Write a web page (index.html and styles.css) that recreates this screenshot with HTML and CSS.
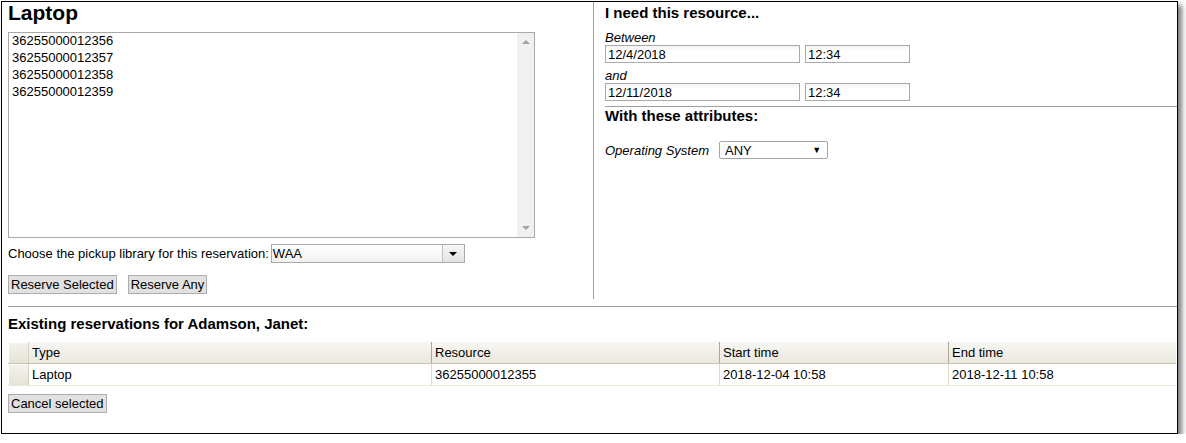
FILE: index.html
```html
<!DOCTYPE html>
<html lang="en">
<head>
    <meta charset="UTF-8">
    <title>Reserve resource</title>
    <link rel="stylesheet" href="styles.css">
</head>
<body>
    <div class="frame">
        <div class="top">
            <!-- resource list and pickup library -->
            <div class="pick">
                <h2>Laptop</h2>
                <div class="listbox">
                    <ul class="items">
                        <li>36255000012356</li>
                        <li>36255000012357</li>
                        <li>36255000012358</li>
                        <li>36255000012359</li>
                    </ul>
                    <div class="scrollbar">
                        <span class="arrow up"></span>
                        <span class="arrow down"></span>
                    </div>
                </div>
                <div class="pickup">
                    <label>Choose the pickup library for this reservation:</label>
                    <span class="combo">
                        <span class="combo-value">WAA</span>
                        <span class="combo-btn"><span class="caret"></span></span>
                    </span>
                </div>
                <div class="actions">
                    <button type="button">Reserve Selected</button>
                    <button type="button">Reserve Any</button>
                </div>
            </div>

            <!-- date range and attributes -->
            <div class="when">
                <h3>I need this resource...</h3>
                <div class="range-label">Between</div>
                <div class="range">
                    <input type="text" class="date" value="12/4/2018">
                    <input type="text" class="time" value="12:34">
                </div>
                <div class="range-label">and</div>
                <div class="range">
                    <input type="text" class="date" value="12/11/2018">
                    <input type="text" class="time" value="12:34">
                </div>
                <hr class="rule">
                <h3>With these attributes:</h3>
                <div class="attr">
                    <span class="attr-name">Operating System</span>
                    <span class="os-select">ANY<span class="os-caret">&#9660;</span></span>
                </div>
            </div>
        </div>

        <div class="existing">
            <hr class="rule">
            <h3>Existing reservations for Adamson, Janet:</h3>
            <table class="grid">
                <thead>
                    <tr>
                        <th class="handle"></th>
                        <th class="col-type">Type</th>
                        <th class="col-res">Resource</th>
                        <th class="col-start">Start time</th>
                        <th class="col-end">End time</th>
                    </tr>
                </thead>
                <tbody>
                    <tr>
                        <td class="handle"></td>
                        <td>Laptop</td>
                        <td>36255000012355</td>
                        <td>2018-12-04 10:58</td>
                        <td>2018-12-11 10:58</td>
                    </tr>
                </tbody>
            </table>
            <button type="button" class="cancel">Cancel selected</button>
        </div>
    </div>
</body>
</html>
```

FILE: styles.css
```css
body {
    margin: 0;
    background: #fff;
    font-family: "Liberation Sans", Arial, sans-serif;
    font-size: 13px;
    color: #000;
}

.frame {
    box-sizing: border-box;
    width: 1177px;
    height: 433px;
    margin: 1px 0 0 1px;
    border: 1px solid #000;
    box-shadow: 4px 4px 5px rgba(0, 0, 0, 0.5);
    overflow: hidden;
}

.top {
    display: flex;
    height: 297px;
}

h2 {
    margin: 0;
    font-size: 21px;
    line-height: 22px;
}
h3 {
    margin: 0;
    font-size: 15px;
    line-height: 18px;
}

.rule {
    margin: 0;
    border: 0;
    border-top: 1px solid #a0a0a0;
}

/* left column */
.pick {
    box-sizing: border-box;
    width: 591px;
    padding-left: 6px;
}
.listbox {
    display: flex;
    box-sizing: border-box;
    width: 527px;
    height: 206px;
    margin-top: 8px;
    border: 1px solid #a9a9a9;
}
.items {
    flex: 1;
    margin: 0;
    padding: 0 0 0 3px;
    list-style: none;
}
.items li {
    height: 17px;
    line-height: 16px;
}
.scrollbar {
    position: relative;
    width: 17px;
    background: #f0f0f0;
}
.arrow {
    position: absolute;
    left: 5px;
    width: 0;
    height: 0;
    border-left: 4px solid transparent;
    border-right: 4px solid transparent;
}
.arrow.up {
    top: 7px;
    border-bottom: 4px solid #a3a3a3;
}
.arrow.down {
    bottom: 7px;
    border-top: 4px solid #a3a3a3;
}

.pickup {
    display: flex;
    align-items: center;
    gap: 2px;
    margin-top: 6px;
}
.combo {
    display: flex;
    box-sizing: border-box;
    width: 194px;
    height: 19px;
    border: 1px solid #a9a9a9;
    background: linear-gradient(#fff, #f1f1f1);
}
.combo-value {
    flex: 1;
    padding-left: 1px;
    line-height: 17px;
}
.combo-btn {
    display: flex;
    align-items: center;
    justify-content: center;
    width: 21px;
    border-left: 1px solid #c3c3c3;
    background: linear-gradient(#f6f6f6, #e3e3e3);
}
.caret {
    width: 0;
    height: 0;
    border-left: 4px solid transparent;
    border-right: 4px solid transparent;
    border-top: 4px solid #000;
}

button {
    box-sizing: border-box;
    height: 19px;
    padding: 0 2px;
    border: 1px solid #adadad;
    border-radius: 0;
    background: #e1e1e1;
    font: inherit;
    color: #000;
}
.actions {
    display: flex;
    gap: 11px;
    margin-top: 12px;
}

/* right column */
.when {
    flex: 1;
    border-left: 1px solid #a0a0a0;
    padding-left: 11px;
}
.when h3 {
    margin-top: 2px;
}
.range-label {
    margin-top: 8px;
    line-height: 15px;
    font-style: italic;
}
.range-label + .range + .range-label {
    margin-top: 5px;
}
.range {
    display: flex;
    gap: 5px;
}
.range input {
    box-sizing: border-box;
    height: 18px;
    margin: 0;
    padding: 0 2px;
    border: 1px solid #a9a9a9;
    background: linear-gradient(#f3f3f3, #fff 5px);
    font: inherit;
    color: #000;
}
.range input.date {
    width: 195px;
}
.range input.time {
    width: 105px;
}
.when .rule {
    margin-top: 5px;
}
.when .rule + h3 {
    margin-top: 0;
}
.attr {
    display: flex;
    align-items: center;
    gap: 10px;
    margin-top: 16px;
}
.attr-name {
    font-style: italic;
}
.os-select {
    display: flex;
    align-items: center;
    justify-content: space-between;
    box-sizing: border-box;
    width: 109px;
    height: 18px;
    padding: 0 6px 0 5px;
    border: 1px solid #a6a6a6;
    border-radius: 2px;
}
.os-caret {
    font-size: 9px;
}

/* existing reservations */
.existing {
    padding-left: 6px;
}
.existing .rule {
    margin-top: 7px;
}
.existing h3 {
    margin: 8px 0 9px;
}
.grid {
    width: 1168px;
    border-collapse: collapse;
    table-layout: fixed;
}
.grid th,
.grid td {
    height: 21px;
    padding: 0 3px;
    text-align: left;
    font-weight: normal;
    white-space: nowrap;
}
.grid th {
    background: linear-gradient(#f7f6f2, #ebe8df);
    border-left: 1px solid #aca899;
    border-bottom: 1px solid #c7c3b3;
}
.grid td {
    border-left: 1px solid #e0dac6;
    border-bottom: 1px solid #ece8d8;
}
.grid .handle {
    width: 14px;
    border-left: 0;
    border-right: 1px solid #d6d2c2;
    background: linear-gradient(#f4f2ec, #e6e2d6);
    box-shadow: inset 1px 1px 0 #fff;
}
.col-type { width: 396px; }
.col-res { width: 281px; }
.col-start { width: 222px; }

.cancel {
    margin-top: 8px;
}
```
